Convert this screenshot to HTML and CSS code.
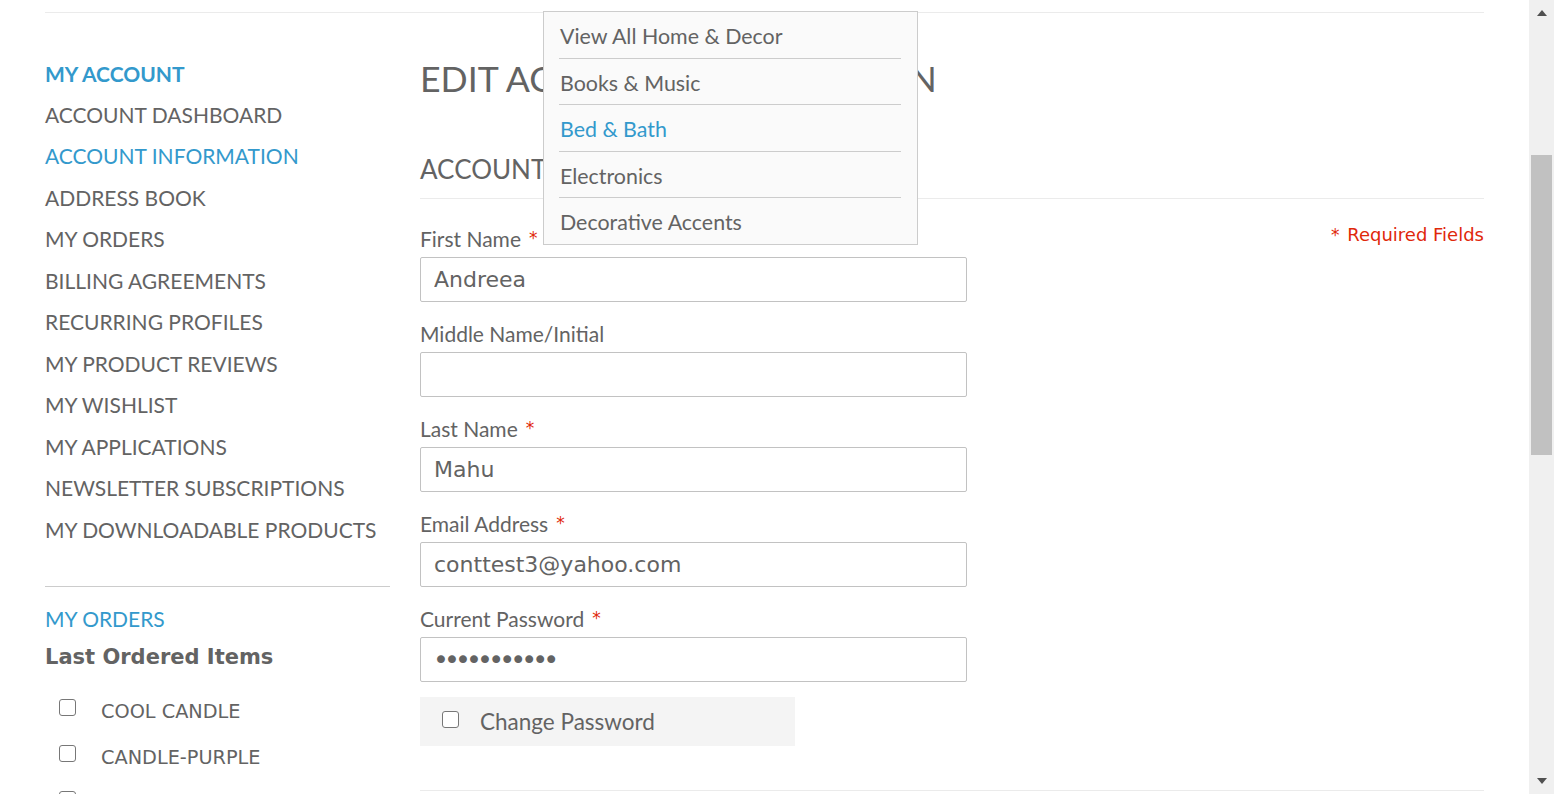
FILE: index.html
```html
<!DOCTYPE html>
<html lang="en">
<head>
<meta charset="utf-8">
<title>Edit Account Information</title>
<link rel="stylesheet" href="styles.css">
</head>
<body>
<div class="window">
  <div class="page">
    <div class="topline"></div>
    <div class="columns">
      <aside class="sidebar">
        <div class="block-account">
          <div class="block-title">MY ACCOUNT</div>
          <ul class="nav">
            <li>ACCOUNT DASHBOARD</li>
            <li class="current">ACCOUNT INFORMATION</li>
            <li>ADDRESS BOOK</li>
            <li>MY ORDERS</li>
            <li>BILLING AGREEMENTS</li>
            <li>RECURRING PROFILES</li>
            <li>MY PRODUCT REVIEWS</li>
            <li>MY WISHLIST</li>
            <li>MY APPLICATIONS</li>
            <li>NEWSLETTER SUBSCRIPTIONS</li>
            <li>MY DOWNLOADABLE PRODUCTS</li>
          </ul>
        </div>
        <div class="block-reorder">
          <div class="reorder-title">MY ORDERS</div>
          <div class="reorder-sub">Last Ordered Items</div>
          <ul class="reorder-items">
            <li><span class="cb"></span><span>COOL CANDLE</span></li>
            <li><span class="cb"></span><span>CANDLE-PURPLE</span></li>
            <li><span class="cb"></span></li>
          </ul>
        </div>
      </aside>
      <main class="main">
        <h1 class="page-title">EDIT ACCOUNT INFORMATION</h1>
        <h2 class="section-title">ACCOUNT INFORMATION</h2>
        <div class="form-row">
          <div class="fields">
            <div class="field">
              <label>First Name<em class="req">*</em></label>
              <input class="text" type="text" value="Andreea">
            </div>
            <div class="field">
              <label>Middle Name/Initial</label>
              <input class="text" type="text" value="">
            </div>
            <div class="field">
              <label>Last Name<em class="req">*</em></label>
              <input class="text" type="text" value="Mahu">
            </div>
            <div class="field">
              <label>Email Address<em class="req">*</em></label>
              <input class="text" type="text" value="conttest3@yahoo.com">
            </div>
            <div class="field">
              <label>Current Password<em class="req">*</em></label>
              <input class="text pass" type="password" value="abcdefghijk">
            </div>
            <div class="change-pass">
              <span class="cb"></span>
              <span>Change Password</span>
            </div>
          </div>
          <p class="required"><span class="star">*</span> Required Fields</p>
        </div>
        <div class="bottom-line"></div>
      </main>
    </div>
    <div class="dropdown">
      <ul>
        <li>View All Home &amp; Decor</li>
        <li>Books &amp; Music</li>
        <li class="active">Bed &amp; Bath</li>
        <li>Electronics</li>
        <li>Decorative Accents</li>
      </ul>
    </div>
  </div>
  <div class="scrollbar">
    <div class="sb-btn sb-up"><span class="tri-up"></span></div>
    <div class="sb-track"><div class="sb-thumb"></div></div>
    <div class="sb-btn sb-down"><span class="tri-down"></span></div>
  </div>
</div>
</body>
</html>
```
FILE: styles.css
```css
* { box-sizing: border-box; }
html, body { margin: 0; padding: 0; height: 794px; overflow: hidden; background: #fff; }
body { font-family: "Lato", "Liberation Sans", sans-serif; color: #636363; }
ul { list-style: none; margin: 0; padding: 0; }

.window { display: flex; height: 794px; position: relative; }
.page { flex: 1; padding: 0 45px; overflow: hidden; }

.topline { height: 13px; border-bottom: 1px solid #ebebeb; }

.columns { display: flex; gap: 30px; }

/* sidebar */
.sidebar { width: 345px; flex: none; padding-top: 41px; }
.block-title { color: #3399cc; font-weight: 700; font-size: 21px; line-height: 39.5px; height: 39.5px; }
.nav li { font-size: 21px; line-height: 41.5px; height: 41.5px; white-space: nowrap; }
.nav li.current { color: #3399cc; }

.block-reorder { margin-top: 36px; border-top: 1px solid #cccccc; padding-top: 12px; }
.reorder-title { color: #3399cc; font-size: 21px; line-height: 40px; }
.reorder-sub { font-family: "DejaVu Sans", Verdana, sans-serif; font-weight: 700; font-size: 21px; line-height: 37px; }
.reorder-items { margin-top: 13px; }
.reorder-items li { display: flex; align-items: flex-start; height: 46px; line-height: 46px; font-family: "DejaVu Sans", Verdana, sans-serif; font-size: 19.3px; }
.reorder-items .cb { margin: 10px 25px 0 14px; }

.cb { display: inline-block; width: 17px; height: 17px; border: 1.5px solid #777; border-radius: 3px; background: #fff; flex: none; }

/* main */
.main { flex: 1; padding-top: 44px; }
.page-title { margin: 0; font-weight: 400; font-size: 35.7px; line-height: 44px; white-space: nowrap; }
.section-title { margin: 52px 0 0; font-weight: 400; font-size: 26px; line-height: 32px; padding-bottom: 13px; border-bottom: 1px solid #ebebeb; }

.form-row { display: flex; justify-content: space-between; align-items: flex-start; padding-top: 28px; }
.fields { width: 547px; }
.field { margin-bottom: 20px; }
.field label { display: block; font-size: 21px; line-height: 24px; height: 24px; margin-bottom: 6px; white-space: nowrap; }
.req { font-style: normal; color: #df280a; font-family: "DejaVu Sans", Verdana, sans-serif; font-size: 17px; margin-left: 8px; vertical-align: top; line-height: 22px; }
.text { display: block; width: 547px; height: 45px; border: 1px solid #c2c2c2; border-radius: 2px; padding: 0 13px; font-family: "DejaVu Sans", Verdana, sans-serif; font-size: 22px; color: #636363; background: #fff; outline: none; }
.text.pass { font-size: 27px; letter-spacing: -4.9px; padding-left: 12px; }

.change-pass { margin-top: -5px; width: 375px; height: 49px; background: #f4f4f4; display: flex; align-items: center; padding-left: 22px; font-size: 22.5px; }
.change-pass .cb { margin: 0 21px 4px 0; }

.required { margin: 0; font-family: "DejaVu Sans", Verdana, sans-serif; font-size: 18px; line-height: 16px; color: #df280a; white-space: nowrap; }
.required .star { font-size: 17px; margin-right: 2px; }

.bottom-line { margin-top: 44px; border-top: 1px solid #ebebeb; }

/* dropdown menu (overlay) */
.dropdown { position: absolute; left: 543px; top: 11px; width: 375px; height: 234px; background: #fafafa; border: 1px solid #cccccc; z-index: 10; overflow: hidden; }
.dropdown ul { padding: 0 16px 0 15px; }
.dropdown li { height: 46.6px; line-height: 48px; padding-left: 1px; font-size: 21.4px; border-bottom: 1px solid #cccccc; white-space: nowrap; }
.dropdown li:last-child { border-bottom: none; }
.dropdown li.active { color: #3399cc; }

/* scrollbar */
.scrollbar { width: 25px; flex: none; background: #f0f0f0; display: flex; flex-direction: column; }
.sb-btn { height: 25px; flex: none; display: flex; justify-content: center; }
.sb-up { padding-top: 10px; }
.sb-down { padding-top: 9px; }
.tri-up { width: 0; height: 0; border-left: 5.5px solid transparent; border-right: 5.5px solid transparent; border-bottom: 6px solid #505050; }
.tri-down { width: 0; height: 0; border-left: 5.5px solid transparent; border-right: 5.5px solid transparent; border-top: 6px solid #505050; }
.sb-track { flex: 1; }
.sb-thumb { margin: 130px 2px 0; height: 300px; background: #c1c1c1; }
```
